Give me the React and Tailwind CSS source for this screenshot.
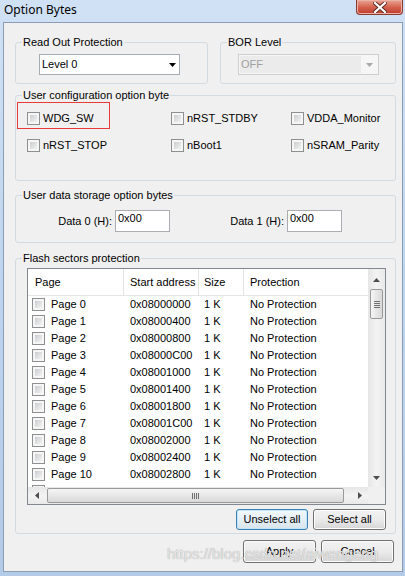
import React from "react";

const UI = "font-['Liberation_Sans',Arial,sans-serif] text-[11px] leading-[13px] text-black";

const pages = Array.from({ length: 11 }, (_, i) => ({
  name: `Page ${i}`,
  addr: "0x" + (0x08000000 + i * 0x400).toString(16).toUpperCase().padStart(8, "0"),
}));

function Check() {
  return (
    <span className="flex w-[13px] h-[13px] shrink-0 border border-[#8e8f8f] bg-[#f6f6f6] p-[2px]">
      <span className="block flex-1 bg-linear-to-br from-[#cbcdd1] to-[#f3f3f3]" />
    </span>
  );
}

function Option({ label }) {
  return (
    <div className="flex items-center h-[13px]">
      <Check />
      <span className="ml-[3px] whitespace-nowrap">{label}</span>
    </div>
  );
}

function Group({ label, className, children }) {
  return (
    <div className={"relative border border-[#d2dbe2] rounded-[3px] " + className}>
      <span className="absolute left-[6px] -top-[8px] bg-[#f0f0f0] px-[1px] leading-[14px] whitespace-nowrap">
        {label}
      </span>
      {children}
    </div>
  );
}

function Arrow({ dir, color = "#4d4d4d" }) {
  const pts = {
    up: "0,4 7,4 3.5,0",
    down: "0,0 7,0 3.5,4",
    left: "4,0 4,7 0,3.5",
    right: "0,0 0,7 4,3.5",
  }[dir];
  const vertical = dir === "up" || dir === "down";
  return (
    <svg width={vertical ? 7 : 4} height={vertical ? 4 : 7}>
      <polygon points={pts} fill={color} />
    </svg>
  );
}

function Button({ children, active, className = "" }) {
  return (
    <div
      className={
        "flex items-center justify-center rounded-[3px] border " +
        (active
          ? "border-[#3c7fb1] shadow-[inset_0_0_0_1px_#bfe6fb] bg-linear-to-b from-[#f4f9fc] via-[#e4eef5] to-[#d8e4ec] "
          : "border-[#707070] shadow-[inset_0_0_0_1px_#fcfcfc] bg-linear-to-b from-[#f2f2f2] via-[#ebebeb] to-[#d6d6d6] ") +
        className
      }
    >
      {children}
    </div>
  );
}

function CloseButton() {
  return (
    <div className="mr-[2px] w-[47px] h-[15px] rounded-b-[4px] border border-t-0 border-[#8a3a30] bg-linear-to-b from-[#e8a595] via-[#d4634f] to-[#c0392b] shadow-[inset_0_0_0_1px_#ecb2a6] flex items-center justify-center">
      <svg width="14" height="11" viewBox="0 0 14 11">
        <path d="M2 1 L12 10 M12 1 L2 10" stroke="#5a2a24" strokeWidth="4" strokeLinecap="square" />
        <path d="M2 1 L12 10 M12 1 L2 10" stroke="#ffffff" strokeWidth="2.2" strokeLinecap="square" />
      </svg>
    </div>
  );
}

function VScroll() {
  return (
    <div className="w-[17px] flex flex-col bg-linear-to-r from-[#e6e6e6] via-[#f3f3f3] to-[#e9e9e9]">
      <div className="h-[17px] flex justify-center pt-[9px]">
        <Arrow dir="up" />
      </div>
      <div className="mx-[2px] mt-[3px] h-[30px] rounded-[2px] border border-[#999999] bg-linear-to-r from-[#f5f5f5] to-[#d9d9d9] flex flex-col items-center justify-center gap-[1px]">
        <span className="block w-[6px] h-[1px] bg-[#6f6f6f]" />
        <span className="block w-[6px] h-[1px] bg-[#6f6f6f]" />
        <span className="block w-[6px] h-[1px] bg-[#6f6f6f]" />
        <span className="block w-[6px] h-[1px] bg-[#6f6f6f]" />
      </div>
      <div className="flex-1" />
      <div className="h-[17px] flex justify-center pt-[6px]">
        <Arrow dir="down" />
      </div>
    </div>
  );
}

function HScroll() {
  return (
    <div className="w-[340px] flex bg-linear-to-b from-[#e6e6e6] via-[#f3f3f3] to-[#e9e9e9]">
      <div className="w-[17px] flex items-center justify-center">
        <Arrow dir="left" />
      </div>
      <div className="ml-[2px] my-[1px] w-[297px] rounded-[2px] border border-[#999999] bg-linear-to-b from-[#f5f5f5] to-[#d9d9d9] flex items-center justify-center gap-[1px]">
        <span className="block w-[1px] h-[6px] bg-[#6f6f6f]" />
        <span className="block w-[1px] h-[6px] bg-[#6f6f6f]" />
        <span className="block w-[1px] h-[6px] bg-[#6f6f6f]" />
        <span className="block w-[1px] h-[6px] bg-[#6f6f6f]" />
      </div>
      <div className="flex-1" />
      <div className="w-[17px] flex items-center justify-center">
        <Arrow dir="right" />
      </div>
    </div>
  );
}

function SectorList() {
  return (
    <div className="w-[359px] h-[237px] border border-[#828790] bg-white flex flex-col">
      <div className="h-[218px] flex">
        <div className="w-[340px] overflow-hidden">
          <div className="flex h-[27px] items-center border-b border-[#e5e5e5]">
            <div className="w-[96px] h-full flex items-center pl-[7px] border-r border-[#e5e5e5]">Page</div>
            <div className="w-[75px] h-full flex items-center pl-[6px] border-r border-[#e5e5e5]">Start address</div>
            <div className="w-[45px] h-full flex items-center pl-[5px] border-r border-[#e5e5e5]">Size</div>
            <div className="flex-1 h-full flex items-center pl-[6px]">Protection</div>
          </div>
          {pages.map((p) => (
            <div key={p.name} className="flex h-[17px] items-center shrink-0">
              <div className="w-[96px] flex items-center pl-[4px]">
                <Check />
                <span className="ml-[6px]">{p.name}</span>
              </div>
              <div className="w-[75px] pl-[6px]">{p.addr}</div>
              <div className="w-[45px] pl-[5px]">1 K</div>
              <div className="flex-1 pl-[6px] whitespace-nowrap">No Protection</div>
            </div>
          ))}
          {/* next row, scrolled mostly out of view: only the top of its checkbox shows */}
          <div className="flex h-[17px] items-center pl-[4px]">
            <Check />
          </div>
        </div>
        <VScroll />
      </div>
      <div className="h-[17px] flex">
        <HScroll />
        <div className="w-[17px] bg-[#f0f0f0]" />
      </div>
    </div>
  );
}

export default function App() {
  return (
    <div
      className={
        "relative w-[405px] h-[576px] overflow-hidden flex flex-col bg-linear-to-b from-[#d0e1f5] via-[#bed4ee] to-[#b4cbe7] " +
        UI
      }
    >
      <div className="h-[22px] shrink-0 flex items-start justify-between">
        <span className="pl-[4px] pt-[2px] font-['Noto_Sans',sans-serif] text-[12px] leading-[16px]">
          Option Bytes
        </span>
        <CloseButton />
      </div>

      <div className="ml-[3px] w-[400px] h-[550px] border border-[#8b9db5] bg-[#f0f0f0] pl-[11px] pr-[6px] pt-[19px] flex flex-col">
        <div className="flex gap-[12px]">
          <Group label="Read Out Protection" className="w-[193px] h-[42px]">
            <div className="ml-[23px] mt-[11px] w-[141px] h-[21px] border border-[#a5acb5] bg-white flex items-center justify-between pl-[2px] pr-[3px]">
              <span>Level 0</span>
              <Arrow dir="down" color="#000" />
            </div>
          </Group>
          <Group label="BOR Level" className="w-[176px] h-[42px]">
            <div className="ml-[17px] mt-[11px] w-[141px] h-[21px] border border-[#cfcfcf] bg-[#f6f6f6] flex items-center p-[1px]">
              <span className="w-[121px] h-full bg-[#ebebeb] pl-[1px] flex items-center text-[#a0a0a0]">OFF</span>
              <span className="flex-1 flex justify-center">
                <Arrow dir="down" color="#a9a9a9" />
              </span>
            </div>
          </Group>
        </div>

        <Group label="User configuration option byte" className="mt-[11px] h-[86px]">
          <div className="absolute left-[1px] top-[6px] w-[93px] h-[27px] border border-[#e8393b]" />
          <div className="grid grid-cols-[144px_120px_1fr] gap-y-[14px] pl-[11px] pt-[16px]">
            <Option label="WDG_SW" />
            <Option label="nRST_STDBY" />
            <Option label="VDDA_Monitor" />
            <Option label="nRST_STOP" />
            <Option label="nBoot1" />
            <Option label="nSRAM_Parity" />
          </div>
        </Group>

        <Group label="User data storage option bytes" className="mt-[14px] h-[48px]">
          <div className="flex items-center pt-[14px]">
            <span className="w-[99px] text-right pr-[3px]">Data 0 (H):</span>
            <div className="w-[55px] h-[22px] border border-[#abadb3] bg-white pl-[2px] pt-[1px]">0x00</div>
            <span className="w-[117px] text-right pr-[3px]">Data 1 (H):</span>
            <div className="w-[55px] h-[22px] border border-[#abadb3] bg-white pl-[2px] pt-[1px]">0x00</div>
          </div>
        </Group>

        <Group label="Flash sectors protection" className="mt-[15px] h-[276px]">
          <div className="pl-[11px] pr-[9px] pt-[9px] flex flex-col">
            <SectorList />
            <div className="mt-[4px] flex justify-end gap-[5px]">
              <Button active className="w-[72px] h-[21px]">Unselect all</Button>
              <Button className="w-[73px] h-[21px]">Select all</Button>
            </div>
          </div>
        </Group>

        <div className="mt-[6px] mr-[2px] flex justify-end gap-[5px]">
          <Button className="w-[73px] h-[23px]">Apply</Button>
          <Button className="w-[73px] h-[23px]">Cancel</Button>
        </div>
      </div>

      <div className="absolute left-[167px] top-[545px] pointer-events-none font-['Liberation_Sans',Arial,sans-serif] text-[15px] leading-[18px] text-[#e4e4e4] [text-shadow:0_0_1px_#9a9a9a]">
        https://blog.csdn.net/aiwengeng
      </div>
    </div>
  );
}
